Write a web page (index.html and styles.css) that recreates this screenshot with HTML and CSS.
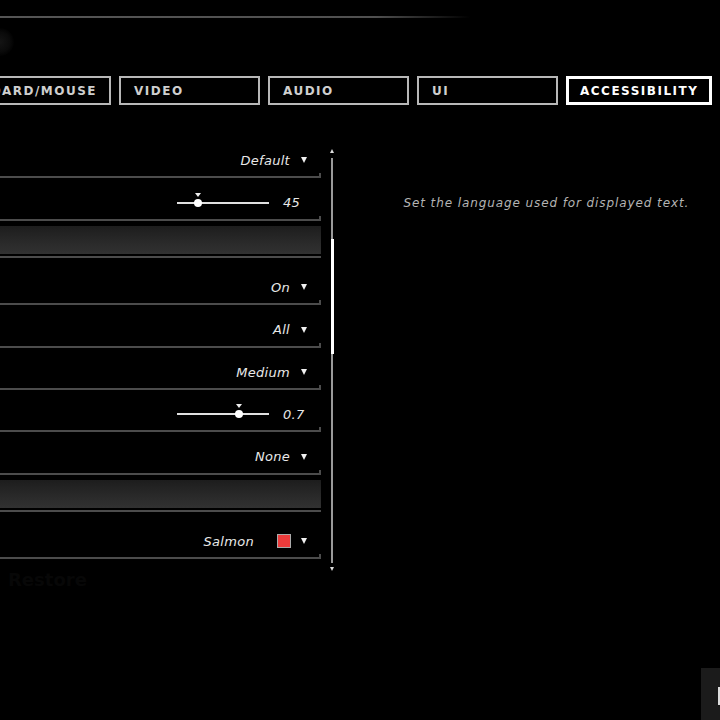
FILE: index.html
```html
<!DOCTYPE html>
<html lang="en">
<head>
    <meta charset="UTF-8">
    <title>Settings - Accessibility</title>
    <link rel="stylesheet" href="styles.css">
</head>
<body>
    <div class="topline"></div>
    <div class="title-area"><span class="title-glow"></span></div>

    <div class="tabs">
        <div class="tab">KEYBOARD/MOUSE</div>
        <div class="tab">VIDEO</div>
        <div class="tab">AUDIO</div>
        <div class="tab">UI</div>
        <div class="tab active">ACCESSIBILITY</div>
    </div>

    <div class="settings">
        <div class="list-col">
            <div class="list">
                <div class="row"><span class="val">Default</span><span class="caret"></span></div>
                <div class="row">
                    <div class="slider"><span class="knob" style="left: 23%"></span></div>
                    <span class="num">45</span>
                </div>
                <div class="group"><div class="bar"></div></div>
                <div class="row"><span class="val">On</span><span class="caret"></span></div>
                <div class="row"><span class="val">All</span><span class="caret"></span></div>
                <div class="row"><span class="val">Medium</span><span class="caret"></span></div>
                <div class="row">
                    <div class="slider"><span class="knob" style="left: 67%"></span></div>
                    <span class="num">0.7</span>
                </div>
                <div class="row"><span class="val">None</span><span class="caret"></span></div>
                <div class="group"><div class="bar"></div></div>
                <div class="row">
                    <span class="val">Salmon</span>
                    <span class="swatch"></span>
                    <span class="caret caret-near"></span>
                </div>
            </div>
            <div class="hint">Restore</div>
        </div>

        <div class="scroll">
            <span class="arrow-up"></span>
            <span class="track track-top"></span>
            <span class="thumb"></span>
            <span class="track track-bottom"></span>
            <span class="arrow-down"></span>
        </div>

        <p class="desc">Set the language used for displayed text.</p>
    </div>

    <div class="corner"><span class="corner-key"></span></div>
</body>
</html>
```

FILE: styles.css
```css
body {
    margin: 0;
    width: 720px;
    height: 720px;
    overflow: hidden;
    background: #000;
    font-family: 'DejaVu Sans', 'Liberation Sans', sans-serif;
    color: #ddd;
    position: relative;
}
.topline {
    margin-top: 16px;
    width: 470px;
    height: 2px;
    background: linear-gradient(to right, #555 0%, #505050 80%, rgba(80,80,80,0) 100%);
}
.title-area {
    height: 58px;
    display: flex;
    align-items: center;
}
.title-glow {
    width: 28px;
    height: 28px;
    margin-left: -14px;
    margin-top: -10px;
    border-radius: 50%;
    background: radial-gradient(circle, #141414 0%, #0a0a0a 50%, rgba(0,0,0,0) 75%);
}

/* tabs */
.tabs {
    display: flex;
    justify-content: flex-end;
    gap: 8px;
    width: 712px;
}
.tab {
    flex-shrink: 0;
    box-sizing: border-box;
    width: 141px;
    height: 29px;
    border: 2px solid #b8b8b8;
    padding-left: 13px;
    display: flex;
    align-items: center;
    font-size: 12px;
    font-weight: bold;
    letter-spacing: 1.5px;
    color: #cfcfcf;
}
.tab:first-child {
    width: auto;
    padding-right: 12px;
}
.tab.active {
    width: 146px;
    border: 3px solid #fff;
    padding-left: 11px;
    color: #fff;
}

/* settings list */
.settings {
    display: flex;
    align-items: flex-start;
    margin-top: 31px;
}
.list-col {
    width: 321px;
    flex-shrink: 0;
}
.row {
    position: relative;
    box-sizing: border-box;
    height: 42.4px;
    padding: 8.5px 14px 0 0;
    border-bottom: 2px solid #4c4c4c;
    display: flex;
    align-items: center;
    justify-content: flex-end;
}
.row::after {
    content: "";
    position: absolute;
    right: 0;
    bottom: 0;
    width: 2px;
    height: 3px;
    background: #4c4c4c;
}
.group + .row {
    margin-top: 5px;
}
.val {
    font-size: 13px;
    font-style: italic;
    letter-spacing: 0.3px;
    color: #e8e8e8;
}
.caret {
    width: 0;
    height: 0;
    margin-left: 11px;
    border-left: 3.5px solid transparent;
    border-right: 3.5px solid transparent;
    border-top: 6px solid #f0f0f0;
}
.caret-near {
    margin-left: 10px;
}
.swatch {
    box-sizing: border-box;
    width: 14px;
    height: 14px;
    margin-left: 23px;
    border: 1px solid #aaa;
    background: #ec3b3b;
}
.slider {
    position: relative;
    width: 92px;
    height: 2px;
    background: #e0e0e0;
}
.knob {
    position: absolute;
    top: -3px;
    width: 8px;
    height: 8px;
    margin-left: -4px;
    border-radius: 50%;
    background: #fff;
}
.knob::before {
    content: "";
    position: absolute;
    left: 1px;
    top: -6px;
    border-left: 3px solid transparent;
    border-right: 3px solid transparent;
    border-top: 4px solid #eee;
}
.num {
    width: 24px;
    margin-left: 14px;
    font-size: 13px;
    font-style: italic;
    letter-spacing: 0.3px;
    color: #e8e8e8;
}
.group {
    box-sizing: border-box;
    height: 37px;
    padding: 5px 0 2px;
    border-bottom: 2px solid #4c4c4c;
}
.bar {
    height: 28px;
    background: linear-gradient(to bottom, #1d1d1d 0%, #2a2a2a 60%, #313131 100%);
}
.hint {
    margin: 10px 0 0 8px;
    font-size: 18px;
    font-weight: bold;
    color: #070707;
}

/* scrollbar */
.scroll {
    width: 7px;
    margin-left: 7.5px;
    margin-top: 13px;
    display: flex;
    flex-direction: column;
    align-items: center;
}
.arrow-up {
    width: 0;
    height: 0;
    border-left: 2px solid transparent;
    border-right: 2px solid transparent;
    border-bottom: 4px solid #ddd;
    margin-bottom: 5px;
}
.arrow-down {
    width: 0;
    height: 0;
    border-left: 2.5px solid transparent;
    border-right: 2.5px solid transparent;
    border-top: 4px solid #ddd;
    margin-top: 4px;
}
.track {
    width: 2px;
    background: #9a9a9a;
}
.track-top {
    height: 81px;
}
.track-bottom {
    height: 209px;
}
.thumb {
    width: 3px;
    height: 115px;
    background: #fff;
}

.desc {
    margin: 60px 0 0 68px;
    font-size: 12px;
    font-style: italic;
    letter-spacing: 0.9px;
    color: #b4b4b4;
    white-space: nowrap;
}

/* corner prompt */
.corner {
    position: absolute;
    right: 0;
    bottom: 0;
    width: 19px;
    height: 52px;
    background: #1b1b1b;
}
.corner-key {
    display: block;
    margin: 19px 0 0 17px;
    width: 4px;
    height: 18px;
    background: #ddd;
}
```
